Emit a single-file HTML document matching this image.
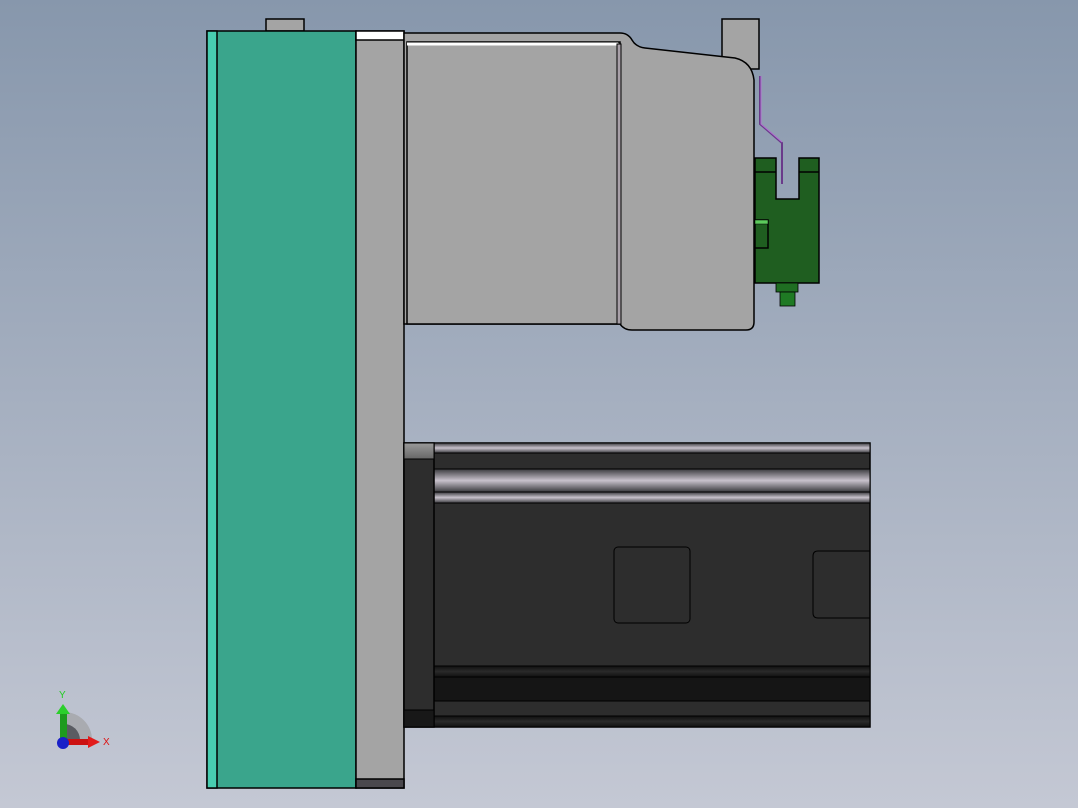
<!DOCTYPE html>
<html><head><style>html,body{margin:0;padding:0;overflow:hidden}body{width:1078px;height:808px;background:linear-gradient(#8797ac,#c4c8d4)}</style></head><body>
<svg width="1078" height="808" viewBox="0 0 1078 808" xmlns="http://www.w3.org/2000/svg" style="position:absolute;left:0;top:0">
<defs>
<linearGradient id="rod" x1="0" y1="0" x2="0" y2="1"><stop offset="0" stop-color="#3a3a3e"/><stop offset="0.5" stop-color="#c8c2cc"/><stop offset="1" stop-color="#3a3a3e"/></linearGradient>
<linearGradient id="dk" x1="0" y1="0" x2="0" y2="1"><stop offset="0" stop-color="#101010"/><stop offset="0.5" stop-color="#2a2a2a"/><stop offset="1" stop-color="#101010"/></linearGradient>
<linearGradient id="fl" x1="0" y1="0" x2="0" y2="1"><stop offset="0" stop-color="#9a9a9a"/><stop offset="1" stop-color="#666"/></linearGradient>
</defs>
<g stroke="#000" stroke-width="1.5">
<rect x="266" y="19" width="38" height="12" fill="#a4a4a4"/>
<rect x="722" y="19" width="37" height="50" fill="#a4a4a4"/>
<rect x="207" y="31" width="149" height="757" fill="#3aa58c"/>
<rect x="207" y="31" width="10" height="757" fill="#48cdb0"/>
<rect x="356" y="31" width="48" height="757" fill="#a4a4a4"/>
<rect x="356" y="31" width="48" height="9" fill="#fff"/>
<rect x="356" y="779" width="48" height="9" fill="#4a484d"/>
<path d="M404 33 L620 33 Q628 33 632 40 Q636 47 645 48 L735 58 Q752 62 754 80 L754 322 Q754 330 746 330 L632 330 Q624 330 620 324 L404 324 Z" fill="#a4a4a4"/>
<rect x="407" y="42" width="213" height="282" fill="#a4a4a4"/>
<path d="M407 44 L618 44" stroke="#fff" stroke-width="3"/>
<rect x="617" y="44" width="4" height="280" fill="#a8a0a8" stroke-width="1"/>
<path d="M760 76 L760 124 L782 143 L782 184" fill="none" stroke="#6a3a8a" stroke-width="2"/>
<path d="M761 76 L761 124 L782 142" fill="none" stroke="#b070d0" stroke-width="1"/>
<path d="M755 158 L776 158 L776 199 L799 199 L799 158 L819 158 L819 283 L755 283 Z" fill="#1f5e20"/>
<path d="M755 172 L776 172 M799 172 L819 172" fill="none"/>
<rect x="755" y="220" width="13" height="28" fill="#1f5e20"/>
<rect x="755" y="220" width="13" height="4" fill="#5ccb5c" stroke-width="0.5"/>
<rect x="776" y="283" width="22" height="9" fill="#1f6e22" stroke-width="0.8"/>
<rect x="780" y="292" width="15" height="14" fill="#1f7a24" stroke-width="0.8"/>
<rect x="404" y="443" width="466" height="284" fill="#2d2d2d"/>
<rect x="434" y="443" width="436" height="10" fill="url(#rod)" stroke-width="1"/>
<rect x="434" y="469" width="436" height="23" fill="url(#rod)" stroke-width="1"/>
<rect x="434" y="492" width="436" height="11" fill="url(#rod)" stroke-width="1"/>
<rect x="434" y="666" width="436" height="11" fill="url(#dk)" stroke-width="1"/>
<rect x="434" y="677" width="436" height="24" fill="#151515" stroke-width="1"/>
<rect x="434" y="716" width="436" height="11" fill="url(#dk)" stroke-width="1"/>
<rect x="404" y="443" width="30" height="284" fill="#2d2d2d"/>
<rect x="404" y="443" width="30" height="16" fill="url(#fl)" stroke-width="1"/>
<rect x="404" y="710" width="30" height="17" fill="#181818" stroke-width="1"/>
<rect x="614" y="547" width="76" height="76" rx="4" fill="none" stroke-width="1"/>
<path d="M870 551 L818 551 Q813 551 813 556 L813 613 Q813 618 818 618 L870 618" fill="none" stroke-width="1"/>
</g>
<g>
<path d="M64 742 A30 30 0 0 1 94 712 L94 742 Z" transform="translate(0,0)" fill="none"/>
<path d="M64 712 A28 28 0 0 1 92 740 L64 740 Z" fill="#a9abb0"/>
<path d="M64 724 A16 16 0 0 1 80 740 L64 740 Z" fill="#5a5c62"/>
<rect x="60" y="712" width="7" height="28" fill="#1e9b1e"/>
<polygon points="56,714 63,704 70,714" fill="#2ccf2c"/>
<rect x="64" y="739" width="26" height="6" fill="#cc1111"/>
<polygon points="88,736 100,742 88,748" fill="#e21b1b"/>
<circle cx="63" cy="743" r="6" fill="#1a20c8"/>
<text x="59" y="698" font-family="Liberation Sans,sans-serif" font-size="10" fill="#22cc22">Y</text>
<text x="103" y="745" font-family="Liberation Sans,sans-serif" font-size="10" fill="#dd1111">X</text>
</g>
</svg>
</body></html>
